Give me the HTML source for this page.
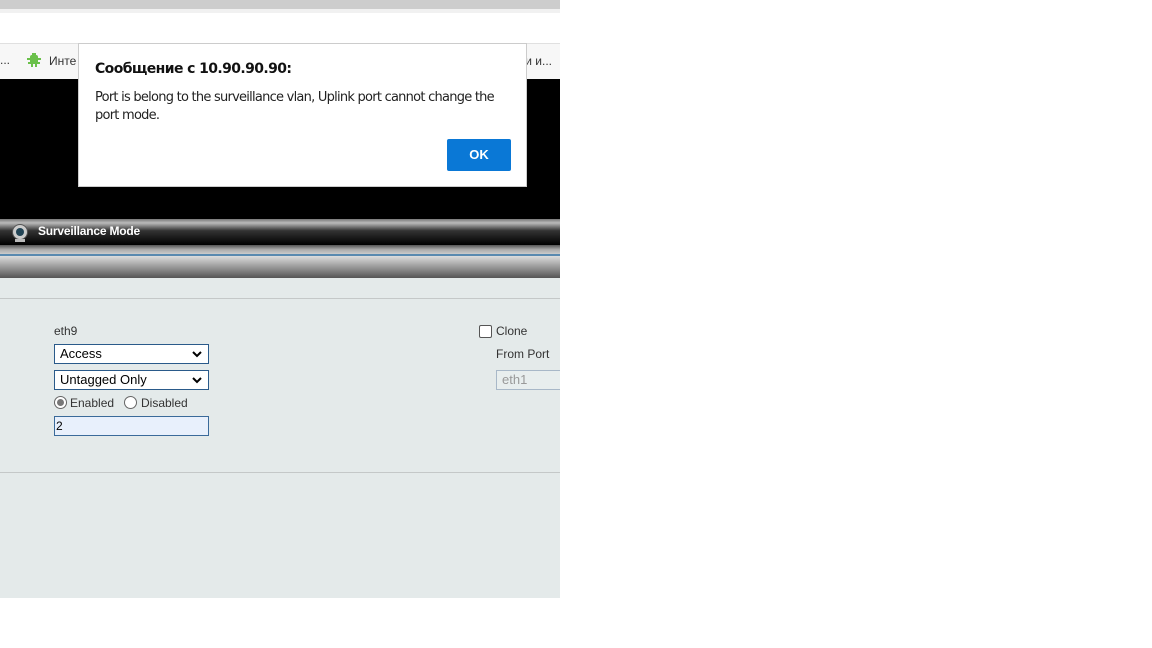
<!DOCTYPE html><html><head><meta charset="utf-8"><style>
body{margin:0;width:1152px;height:648px;background:#fff;position:relative;overflow:hidden;font-family:"Liberation Sans",Arial,sans-serif}
.a{position:absolute}
#w{position:absolute;left:0;top:0;width:560px;height:648px;overflow:hidden}
.sel{background:#fff;border:1px solid #2a5a8a;font-size:13px;line-height:18px;padding-left:5px;box-sizing:border-box;width:155px;height:20px}
.sel svg{position:absolute;right:6px;top:6px}
</style></head><body><div id="w">
<div class="a" style="left:0;top:0;width:560px;height:9px;background:#cdcdcd"></div>
<div class="a" style="left:0;top:9px;width:560px;height:4px;background:#f1f1f1"></div>
<div class="a" style="left:0;top:43px;width:560px;height:36px;background:#f7f7f7;border-top:1px solid #e0e0e0"></div>
<div class="a" style="left:0;top:53px;font-size:12px;color:#333">...</div>
<svg class="a" style="left:26px;top:52px" width="16" height="16" viewBox="0 0 16 16"><g fill="#6ac04a"><rect x="4" y="3" width="8" height="9" rx="2"/><rect x="1" y="6" width="14" height="2"/><rect x="2" y="10" width="12" height="2"/><rect x="5" y="12" width="2" height="3"/><rect x="9" y="12" width="2" height="3"/><rect x="6" y="1" width="4" height="2"/></g></svg>
<div class="a" style="left:49px;top:54px;font-size:12px;color:#333">Инте</div>
<div class="a" style="left:520px;top:54px;font-size:12px;color:#333">ки и...</div>
<div class="a" style="left:0;top:79px;width:560px;height:140px;background:#000"></div>
<div class="a" style="left:0;top:219px;width:560px;height:26px;background:linear-gradient(#777,#bbb 15%,#333 45%,#000)"></div>
<div class="a" style="left:12px;top:224px;width:14px;height:14px;border-radius:50%;background:#ccc;border:1px solid #555"><div style="margin:3px;width:8px;height:8px;border-radius:50%;background:#245"></div></div>
<div class="a" style="left:15px;top:239px;width:10px;height:3px;background:#bbb"></div>
<div class="a" style="left:38px;top:224px;font-size:12px;font-weight:bold;color:#fff;letter-spacing:-0.2px">Surveillance Mode</div>
<div class="a" style="left:0;top:245px;width:560px;height:9px;background:linear-gradient(#555,#aaa,#ccc)"></div>
<div class="a" style="left:0;top:254px;width:560px;height:2px;background:#5a8ab0"></div>
<div class="a" style="left:0;top:256px;width:560px;height:22px;background:linear-gradient(#ddd,#999 50%,#555)"></div>
<div class="a" style="left:0;top:278px;width:560px;height:320px;background:#e4eaea"></div>
<div class="a" style="left:0;top:298px;width:560px;height:1px;background:#c4c8c8"></div>
<div class="a" style="left:0;top:472px;width:560px;height:1px;background:#c4c8c8"></div>
<div class="a" style="left:54px;top:324px;font-size:12px;color:#333">eth9</div>
<div class="a sel" style="left:54px;top:344px">Access<svg width="10" height="7" viewBox="0 0 10 7"><path d="M1 1l4 4 4-4" stroke="#000" stroke-width="2" fill="none"/></svg></div>
<div class="a sel" style="left:54px;top:370px">Untagged Only<svg width="10" height="7" viewBox="0 0 10 7"><path d="M1 1l4 4 4-4" stroke="#000" stroke-width="2" fill="none"/></svg></div>
<div class="a" style="left:54px;top:396px;width:11px;height:11px;border:1px solid #666;border-radius:50%;background:#fff"><div style="margin:2px;width:7px;height:7px;border-radius:50%;background:#777"></div></div>
<div class="a" style="left:70px;top:396px;font-size:12px;color:#333">Enabled</div>
<div class="a" style="left:124px;top:396px;width:11px;height:11px;border:1px solid #666;border-radius:50%;background:#fff"></div>
<div class="a" style="left:141px;top:396px;font-size:12px;color:#333">Disabled</div>
<div class="a" style="left:54px;top:416px;width:155px;height:20px;box-sizing:border-box;background:#e8f0fc;border:1px solid #3a6a9a;font-size:12px;line-height:18px;padding-left:1px">2</div>
<div class="a" style="left:479px;top:325px;width:11px;height:11px;border:1px solid #555;border-radius:2px;background:#fff"></div>
<div class="a" style="left:496px;top:324px;font-size:12px;color:#333">Clone</div>
<div class="a" style="left:496px;top:347px;font-size:12px;color:#333">From Port</div>
<div class="a" style="left:496px;top:370px;width:90px;height:20px;box-sizing:border-box;background:#e8eeee;border:1px solid #a8b8c8;font-size:13px;line-height:18px;padding-left:5px;color:#999">eth1</div>
<div class="a" style="left:78px;top:43px;width:449px;height:144px;background:#fff;border:1px solid #ccc;box-sizing:border-box"></div>
<div class="a" style="left:95px;top:61px;font-size:14px;font-weight:bold;color:#111;font-family:'DejaVu Sans',sans-serif;letter-spacing:-0.6px">Сообщение с 10.90.90.90:</div>
<div class="a" style="left:95px;top:89px;width:420px;font-size:13px;line-height:18px;color:#222;font-family:'DejaVu Sans',sans-serif;letter-spacing:-0.75px">Port is belong to the surveillance vlan, Uplink port cannot change the<br>port mode.</div>
<div class="a" style="left:447px;top:139px;width:64px;height:32px;background:#0a78d6;border-radius:2px;color:#fff;font-size:13px;font-weight:bold;text-align:center;line-height:32px">OK</div>
</div></body></html>
